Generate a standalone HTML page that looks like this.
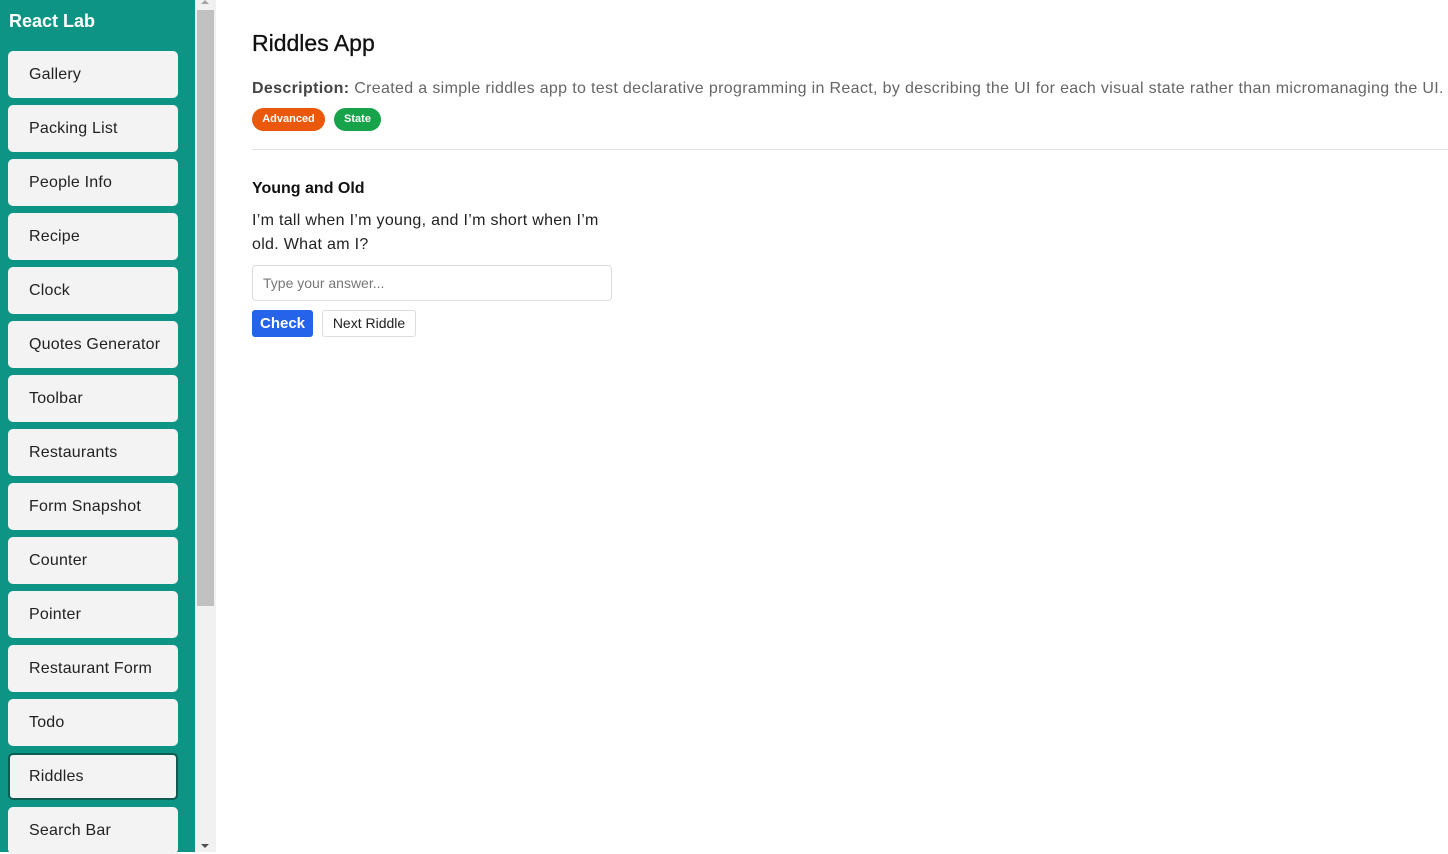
<!DOCTYPE html>
<html><head><meta charset="utf-8"><style>
*{box-sizing:border-box;margin:0;padding:0}
body{width:1448px;height:852px;overflow:hidden;font-family:"Liberation Sans",sans-serif;background:#fff;position:relative}
.side{position:absolute;left:0;top:0;width:195px;height:852px;background:#0e9484}
.side h1{position:absolute;left:9px;top:11px;color:#fff;font-size:18px;font-weight:bold}
.btn{position:absolute;left:8px;width:170px;height:47px;background:#f3f3f3;border-radius:5px;font-size:16px;color:#222;padding-left:21px;line-height:47px;letter-spacing:0.2px}
.btn.act{border:2px solid #0d5c52;padding-left:19px;line-height:43px}
.sb{position:absolute;left:195px;top:0;width:21px;height:852px;background:#f1f1f1}
.thumb{position:absolute;left:2px;top:10px;width:17px;height:596px;background:#c1c1c1}
.main{position:absolute;left:252px;top:0;right:0}
h2{position:absolute;top:30px;font-size:23px;font-weight:normal;color:#111;white-space:nowrap;-webkit-text-stroke:0.3px #111}
.desc{position:absolute;top:80px;font-size:16px;color:#666;white-space:nowrap;letter-spacing:0.34px}
.desc b{color:#444}
.tag{position:absolute;top:108px;height:23px;border-radius:12px;color:#fff;font-size:11px;font-weight:bold;line-height:23px;text-align:center}
hr{position:absolute;top:149px;left:0;width:1196px;border:0;border-top:1px solid #e3e3e3}
h3{position:absolute;top:180px;font-size:16px;color:#111}
.q{position:absolute;top:209px;font-size:16px;color:#222;line-height:24px;width:360px;letter-spacing:0.3px}
.inp{position:absolute;top:265px;width:360px;height:36px;border:1px solid #ddd;border-radius:4px;font-size:14px;color:#777;padding-left:10px;line-height:34px}
.b1{position:absolute;top:310px;left:0;width:61px;height:27px;background:#2563eb;color:#fff;border-radius:3px;font-size:15px;font-weight:bold;line-height:27px;text-align:center}
.b2{position:absolute;top:310px;left:70px;width:94px;height:27px;border:1px solid #ddd;color:#222;border-radius:3px;font-size:14px;line-height:25px;text-align:center}
</style></head><body>
<div class="side"><h1>React Lab</h1>
<div class="btn" style="top:51px">Gallery</div>
<div class="btn" style="top:105px">Packing List</div>
<div class="btn" style="top:159px">People Info</div>
<div class="btn" style="top:213px">Recipe</div>
<div class="btn" style="top:267px">Clock</div>
<div class="btn" style="top:321px">Quotes Generator</div>
<div class="btn" style="top:375px">Toolbar</div>
<div class="btn" style="top:429px">Restaurants</div>
<div class="btn" style="top:483px">Form Snapshot</div>
<div class="btn" style="top:537px">Counter</div>
<div class="btn" style="top:591px">Pointer</div>
<div class="btn" style="top:645px">Restaurant Form</div>
<div class="btn" style="top:699px">Todo</div>
<div class="btn act" style="top:753px">Riddles</div>
<div class="btn" style="top:807px">Search Bar</div>
</div>
<div class="sb"><div class="thumb"></div>
<div style="position:absolute;left:6px;top:0;border:4px solid transparent;border-bottom-color:#a3a3a3;border-top:0"></div>
<div style="position:absolute;left:6px;top:844px;border:4px solid transparent;border-top-color:#505050;border-bottom:0"></div></div>
<div class="main">
<h2>Riddles App</h2>
<div class="desc"><b>Description:</b> Created a simple riddles app to test declarative programming in React, by describing the UI for each visual state rather than micromanaging the UI.</div>
<div class="tag" style="left:0;width:73px;background:#ea580c">Advanced</div>
<div class="tag" style="left:82px;width:47px;background:#16a34a">State</div>
<hr>
<h3>Young and Old</h3>
<div class="q">I’m tall when I’m young, and I’m short when I’m old. What am I?</div>
<div class="inp">Type your answer...</div>
<div class="b1">Check</div>
<div class="b2">Next Riddle</div>
</div>
</body></html>
